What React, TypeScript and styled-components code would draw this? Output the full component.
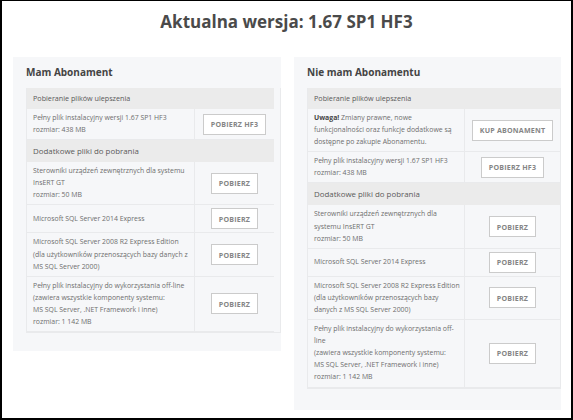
import styled, { createGlobalStyle } from "styled-components";
import { Fragment, ReactNode } from "react";

const GlobalStyle = createGlobalStyle`
  html, body {
    margin: 0;
    padding: 0;
    background: #fff;
    font-family: "Open Sans", "DejaVu Sans", sans-serif;
  }
`

const Frame = styled.div`
  width: 573px;
  height: 420px;
  box-sizing: border-box;
  border: 2px solid #000;
  border-top-width: 1px;
  background: #fff;
  overflow: hidden;
`

const Title = styled.h1`
  margin: 0;
  padding-top: 10px;
  text-align: center;
  font-size: 17px;
  line-height: 22px;
  font-weight: 700;
  color: #4a4a4a;
`

const Columns = styled.div`
  display: flex;
  align-items: flex-start;
  gap: 13px;
  margin-top: 24px;
  padding-left: 11px;
`

const Panel = styled.section<{ $width: number; $bottom: number }>`
  width: ${p => p.$width}px;
  box-sizing: border-box;
  background: #f6f7f9;
  padding: 8px 0 ${p => p.$bottom}px 13px;
`

const PanelTitle = styled.h2`
  margin: 0 0 9px;
  font-size: 10px;
  line-height: 14px;
  font-weight: 700;
  color: #444;
`

const Table = styled.div<{ $cols: string }>`
  display: grid;
  grid-template-columns: ${p => p.$cols};
  border: 1px solid #e9eaec;
  border-top: 0;
`

const HeadRow = styled.div<{ $big?: boolean }>`
  grid-column: 1 / -1;
  background: #ebebeb;
  color: #5a5a5a;
  padding: 4px 6px;
  font-size: ${p => (p.$big ? "7.9px" : "7.2px")};
  line-height: ${p => (p.$big ? "14px" : "13px")};
`

const TextCell = styled.div`
  padding: 3px 6px;
  font-size: 6.9px;
  line-height: 12.1px;
  color: #6e6e6e;
  white-space: nowrap;
  border-right: 1px solid #e9eaec;
  border-bottom: 1px solid #e9eaec;
  display: flex;
  flex-direction: column;
  justify-content: center;
  b {
    color: #444;
  }
`

const ButtonCell = styled.div`
  display: flex;
  align-items: center;
  justify-content: center;
  padding: 3px 0;
  border-bottom: 1px solid #e9eaec;
`

const Button = styled.button`
  height: 21px;
  box-sizing: border-box;
  padding: 0 7px;
  background: #fff;
  border: 1px solid #cbcbcb;
  font-family: "Open Sans", "DejaVu Sans", sans-serif;
  font-size: 7.1px;
  font-weight: 700;
  color: #858585;
  text-transform: uppercase;
  letter-spacing: 0.2px;
  white-space: nowrap;
`

type Row = { lines: ReactNode[]; button: string } | { head: string; big?: boolean };

const left: Row[] = [
  { head: "Pobieranie plików ulepszenia" },
  { lines: ["Pełny plik instalacyjny wersji 1.67 SP1 HF3", "rozmiar: 438 MB"], button: "Pobierz HF3" },
  { head: "Dodatkowe pliki do pobrania", big: true },
  { lines: ["Sterowniki urządzeń zewnętrznych dla systemu", "InsERT GT", "rozmiar: 50 MB"], button: "Pobierz" },
  { lines: ["Microsoft SQL Server 2014 Express"], button: "Pobierz" },
  {
    lines: ["Microsoft SQL Server 2008 R2 Express Edition", "(dla użytkowników przenoszących bazy danych z", "MS SQL Server 2000)"],
    button: "Pobierz",
  },
  {
    lines: [
      "Pełny plik instalacyjny do wykorzystania off-line",
      "(zawiera wszystkie komponenty systemu:",
      "MS SQL Server, .NET Framework i inne)",
      "rozmiar: 1 142 MB",
    ],
    button: "Pobierz",
  },
];

const right: Row[] = [
  { head: "Pobieranie plików ulepszenia" },
  {
    lines: [
      <><b>Uwaga!</b> Zmiany prawne, nowe</>,
      "funkcjonalności oraz funkcje dodatkowe są",
      "dostępne po zakupie Abonamentu.",
    ],
    button: "Kup abonament",
  },
  { lines: ["Pełny plik instalacyjny wersji 1.67 SP1 HF3", "rozmiar: 438 MB"], button: "Pobierz HF3" },
  { head: "Dodatkowe pliki do pobrania", big: true },
  { lines: ["Sterowniki urządzeń zewnętrznych dla", "systemu InsERT GT", "rozmiar: 50 MB"], button: "Pobierz" },
  { lines: ["Microsoft SQL Server 2014 Express"], button: "Pobierz" },
  {
    lines: ["Microsoft SQL Server 2008 R2 Express Edition", "(dla użytkowników przenoszących bazy", "danych z MS SQL Server 2000)"],
    button: "Pobierz",
  },
  {
    lines: [
      "Pełny plik instalacyjny do wykorzystania off-",
      "line",
      "(zawiera wszystkie komponenty systemu:",
      "MS SQL Server, .NET Framework i inne)",
      "rozmiar: 1 142 MB",
    ],
    button: "Pobierz",
  },
];

function FileTable({ rows, cols }: { rows: Row[]; cols: string }) {
  return (
    <Table $cols={cols}>
      {rows.map((r, i) =>
        "head" in r ? (
          <HeadRow key={i} $big={r.big}>{r.head}</HeadRow>
        ) : (
          <Fragment key={i}>
            <TextCell>
              {r.lines.map((l, j) => (
                <span key={j}>{l}</span>
              ))}
            </TextCell>
            <ButtonCell>
              <Button>{r.button}</Button>
            </ButtonCell>
          </Fragment>
        )
      )}
    </Table>
  );
}

export default function App() {
  return (
    <>
      <GlobalStyle />
      <Frame>
        <Title>Aktualna wersja: 1.67 SP1 HF3</Title>
        <Columns>
          <Panel $width={268} $bottom={18}>
            <PanelTitle>Mam Abonament</PanelTitle>
            <FileTable rows={left} cols="168px 79px" />
          </Panel>
          <Panel $width={267} $bottom={21}>
            <PanelTitle>Nie mam Abonamentu</PanelTitle>
            <FileTable rows={right} cols="157px 95px" />
          </Panel>
        </Columns>
      </Frame>
    </>
  );
}
